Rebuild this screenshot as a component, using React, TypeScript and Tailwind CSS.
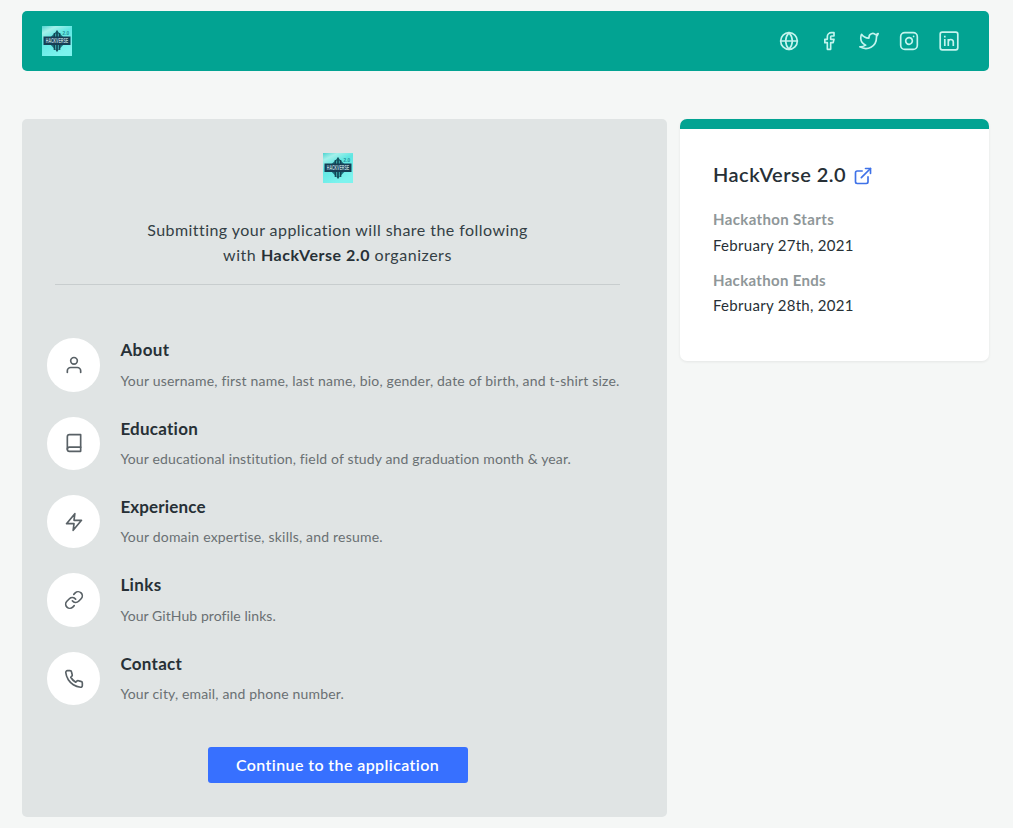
import type { ReactNode } from "react";
import { FiBook, FiExternalLink, FiFacebook, FiGlobe, FiInstagram, FiLink, FiPhone, FiTwitter, FiUser, FiZap } from "react-icons/fi";

function Logo() {
  return (
    <svg width="30" height="30" viewBox="0 0 30 30" className="block shrink-0 overflow-visible">
      <defs>
        <linearGradient id="sky" x1="0" y1="0" x2="0.5" y2="1">
          <stop offset="0" stopColor="#4fd3d0" />
          <stop offset="0.2" stopColor="#a3f0ea" />
          <stop offset="0.45" stopColor="#5fe6e2" />
          <stop offset="1" stopColor="#7df3ee" />
        </linearGradient>
      </defs>
      <rect width="30" height="30" fill="url(#sky)" />
      <path d="M15 4.5 25 15 15 25.5 5 15Z" fill="#1c6f7c" />
      <path d="M12.3 7v17M15 4.5v21M17.7 7v17" stroke="#12424f" strokeWidth="1.2" />
      <path d="M13.6 8v15M16.4 8v15" stroke="#54c8c8" strokeWidth="0.6" />
      <path d="M1.5 10.5h27v8.5h-27z" fill="#163f55" />
      <g transform="translate(15 17) scale(0.54 1)">
        <text textAnchor="middle" fontSize="6.6" fontWeight="700" fill="#b4d0d9" fontFamily="Liberation Sans, sans-serif">HACKVERSE</text>
      </g>
      <text x="20.5" y="9.2" fontSize="4.8" fontWeight="700" fill="#278e98" fontFamily="Liberation Sans, sans-serif">2.0</text>
    </svg>
  );
}

function LinkedinSquare() {
  return (
    <svg width="20" height="20" viewBox="0 0 20 20" fill="none" stroke="currentColor" strokeWidth="1.7" strokeLinejoin="round">
      <rect x="1.2" y="1.2" width="17.6" height="17.6" rx="2" />
      <path d="M5.8 8v7M5.8 4.8v1.6M9.3 15V8M9.3 11c0-3.3 5-3.4 5 0v4" />
    </svg>
  );
}

const items: { title: string; text: string; icon: ReactNode; titleClass: string; textClass: string }[] = [
  { title: "About", text: "Your username, first name, last name, bio, gender, date of birth, and t-shirt size.", icon: <FiUser />, titleClass: "tracking-[0.4px]", textClass: "tracking-[0.195px]" },
  { title: "Education", text: "Your educational institution, field of study and graduation month & year.", icon: <FiBook />, titleClass: "tracking-[0.25px]", textClass: "tracking-[0.14px]" },
  { title: "Experience", text: "Your domain expertise, skills, and resume.", icon: <FiZap />, titleClass: "tracking-[0.14px]", textClass: "tracking-[0.2px]" },
  { title: "Links", text: "Your GitHub profile links.", icon: <FiLink />, titleClass: "tracking-[0.4px]", textClass: "tracking-[0.07px]" },
  { title: "Contact", text: "Your city, email, and phone number.", icon: <FiPhone />, titleClass: "tracking-[0.28px]", textClass: "tracking-[0.16px]" },
];

export default function App() {
  return (
    <div className="min-h-[828px] bg-[#f5f7f6] pt-[11px] pr-6 pb-[11px] pl-[22px] font-['Lato','Noto_Sans',sans-serif] text-[#273036]">
      <header className="flex h-[60px] items-center justify-between rounded-[5px] bg-[#02a392] pr-[30px] pl-5">
        <Logo />
        <nav className="flex items-center gap-5 text-xl text-[#c4f4ee]">
          <FiGlobe />
          <FiFacebook />
          <FiTwitter />
          <FiInstagram />
          <LinkedinSquare />
        </nav>
      </header>
      <div className="mt-12 flex items-start gap-[13px]">
        <main className="h-[698px] w-[645px] rounded-[5px] bg-[#e0e4e4] pt-[34px] pr-[47px] pl-[33px]">
          <div className="flex flex-col items-center">
            <Logo />
            <p className="mt-[34px] text-center text-base leading-[25px] whitespace-nowrap text-[#343f45]">
              <span className="tracking-[0.45px]">Submitting your application will share the following</span>
              <br />
              <span className="tracking-[0.53px]">with <b className="font-bold text-[#273036]">HackVerse 2.0</b> organizers</span>
            </p>
          </div>
          <hr className="mt-[17px] border-[#c8cdce]" />
          <ul className="mt-[53.3px] -ml-2 flex flex-col gap-[25px]">
            {items.map((item) => (
              <li key={item.title} className="flex h-[53.4px] items-center">
                <span className="flex size-[53.4px] shrink-0 items-center justify-center rounded-full bg-white text-xl text-[#596166]">{item.icon}</span>
                <div className="ml-5 whitespace-nowrap">
                  <h2 className="text-[17px] leading-[25px] font-bold"><span className={item.titleClass}>{item.title}</span></h2>
                  <p className="mt-[5.4px] text-sm leading-[25px] text-[#6a7073]"><span className={item.textClass}>{item.text}</span></p>
                </div>
              </li>
            ))}
          </ul>
          <div className="mt-[41.7px] flex justify-center">
            <button className="h-9 w-[260px] rounded-[3px] bg-[#3770ff] text-base font-semibold tracking-[0.4px] whitespace-nowrap text-white">Continue to the application</button>
          </div>
        </main>
        <aside className="h-[242px] w-[309px] rounded-[7px] border-t-10 border-[#02a392] bg-white pt-8 pl-[33px] shadow-[0_1px_3px_rgba(0,0,0,0.07)]">
          <h1 className="flex items-center gap-[7px] text-xl leading-[26px] font-semibold">
            <span className="tracking-[0.48px]">HackVerse 2.0</span>
            <FiExternalLink className="mt-1 text-[#3f72e8]" size={20} />
          </h1>
          <dl className="text-[15px] leading-[25px]">
            <dt className="mt-5 font-bold tracking-[0.36px] text-[#8f9799]">Hackathon Starts</dt>
            <dd className="mt-px tracking-[0.29px]">February 27th, 2021</dd>
            <dt className="mt-[10px] font-bold tracking-[0.32px] text-[#8f9799]">Hackathon Ends</dt>
            <dd className="tracking-[0.29px]">February 28th, 2021</dd>
          </dl>
        </aside>
      </div>
    </div>
  );
}
